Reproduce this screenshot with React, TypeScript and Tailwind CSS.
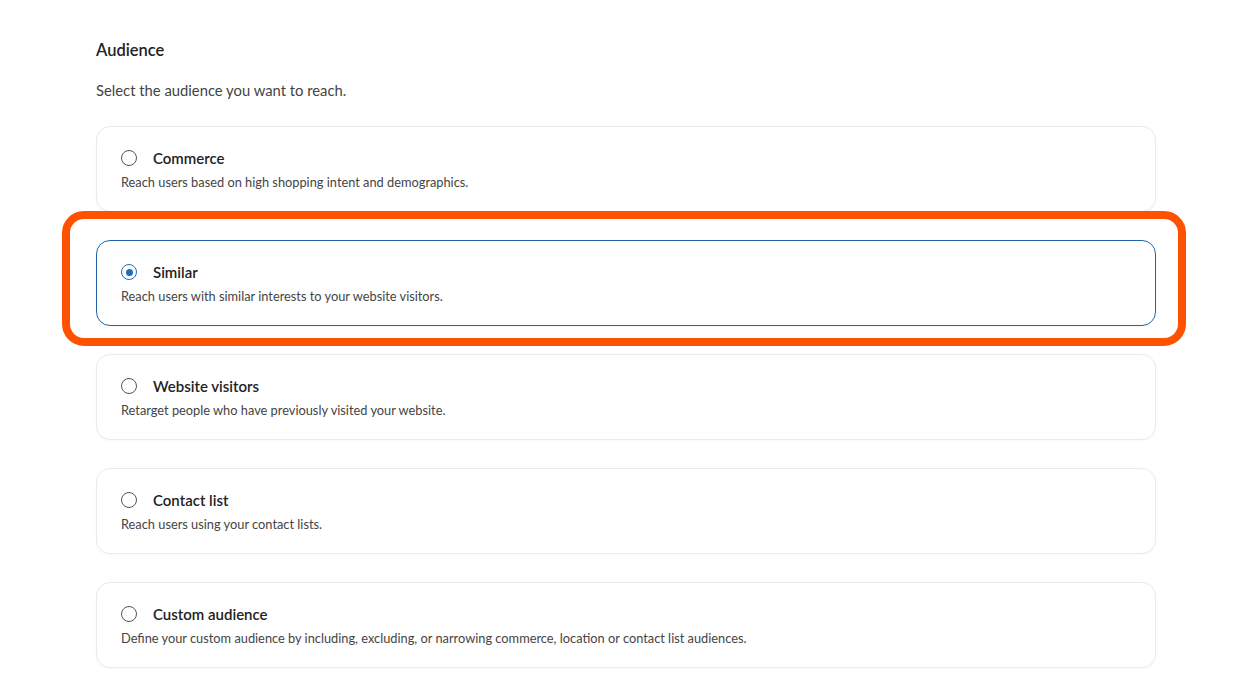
import React, { useState } from 'react';

interface AudienceOption {
  id: string;
  title: string;
  description: string;
}

const options: AudienceOption[] = [
  { id: 'commerce', title: 'Commerce', description: 'Reach users based on high shopping intent and demographics.' },
  { id: 'similar', title: 'Similar', description: 'Reach users with similar interests to your website visitors.' },
  { id: 'visitors', title: 'Website visitors', description: 'Retarget people who have previously visited your website.' },
  { id: 'contacts', title: 'Contact list', description: 'Reach users using your contact lists.' },
  {
    id: 'custom',
    title: 'Custom audience',
    description: 'Define your custom audience by including, excluding, or narrowing commerce, location or contact list audiences.',
  },
];

export default function App() {
  const [selected, setSelected] = useState('similar');

  return (
    <div className="min-h-screen bg-white font-['Lato','Liberation_Sans',sans-serif] text-[#222]">
      <div className="relative pl-[96px] pr-[102px] pt-[41px]">
        <h2 className="text-[16.5px] font-semibold leading-[18px] text-[#222]">Audience</h2>
        <p className="mt-[22px] text-[14.8px] leading-[18px] text-[#444]">Select the audience you want to reach.</p>

        <div className="mt-[27px] flex flex-col gap-[28px]">
          {options.map((opt) => {
            const isSelected = selected === opt.id;
            return (
              <div key={opt.id} className="relative">
                {isSelected && (
                  <div className="pointer-events-none absolute -left-[34px] -right-[30px] -top-[29px] -bottom-[20px] rounded-[22px] border-[8px] border-[#ff5200]" />
                )}
                <label
                  onClick={() => setSelected(opt.id)}
                  className={
                    'flex h-[86px] cursor-pointer flex-col rounded-[14px] border bg-white pl-[24px] pt-[21px] shadow-[0_1px_3px_rgba(0,0,0,0.03)] ' +
                    (isSelected ? 'border-[#1f65a8]' : 'border-[#ebebeb]')
                  }
                >
                  <div className="flex items-center">
                    <span
                      className={
                        'flex h-[16px] w-[16px] items-center justify-center rounded-full border bg-white ' +
                        (isSelected ? 'border-[#1f6fb8]' : 'border-[#555]')
                      }
                    >
                      {isSelected && <span className="h-[7px] w-[7px] rounded-full bg-[#1f6fb8]" />}
                    </span>
                    <span className="ml-[16px] text-[15px] font-semibold leading-[20px] text-[#222]">{opt.title}</span>
                  </div>
                  <p className="mt-[6px] text-[12.8px] leading-[16px] text-[#444]">{opt.description}</p>
                </label>
              </div>
            );
          })}
        </div>
      </div>
    </div>
  );
}
